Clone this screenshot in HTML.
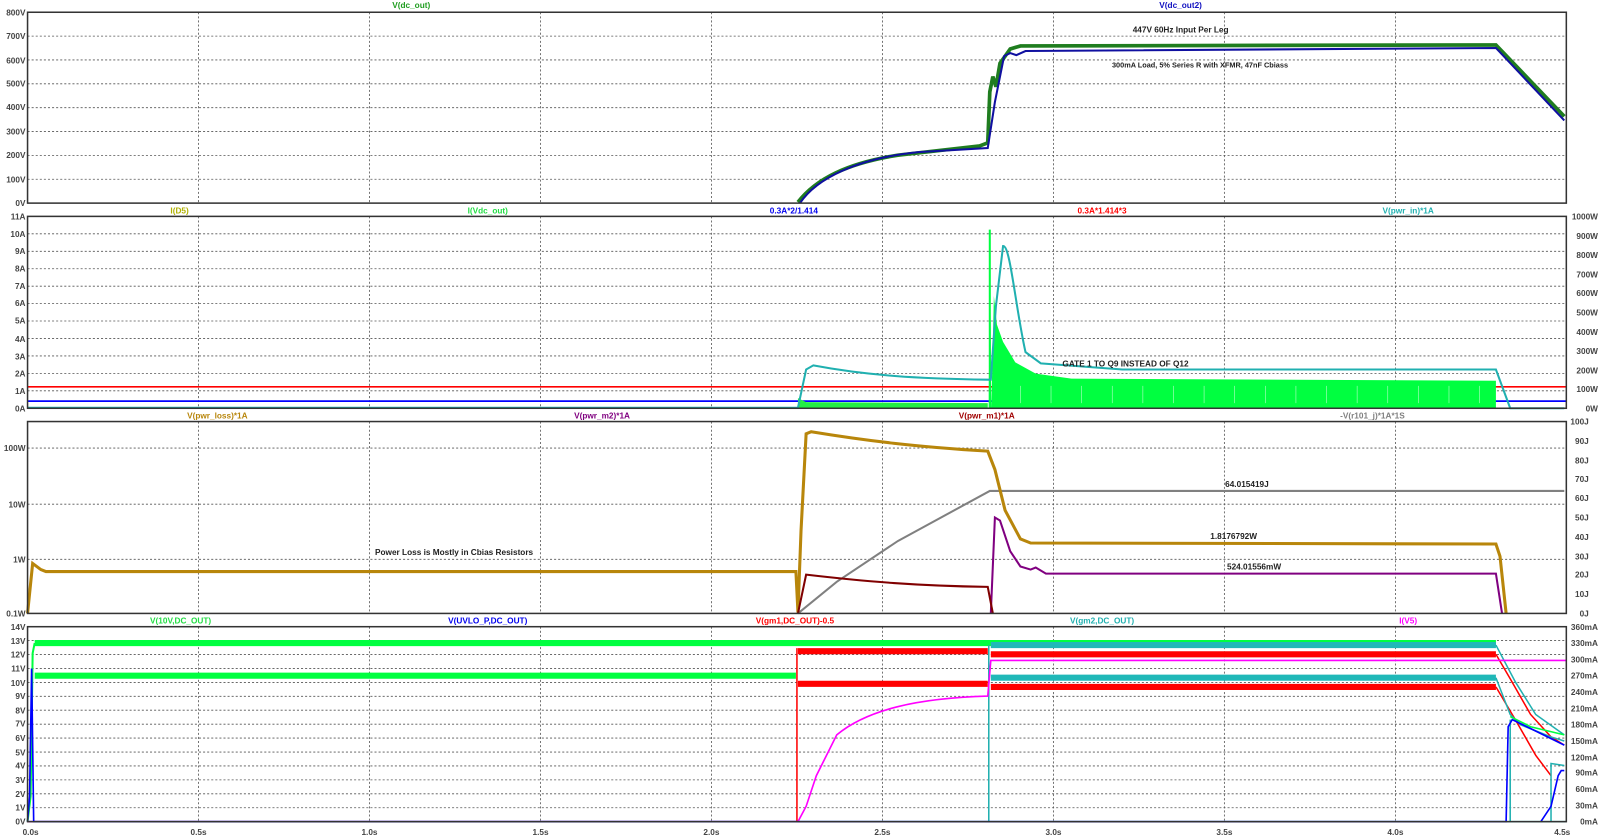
<!DOCTYPE html>
<html><head><meta charset="utf-8"><style>
html,body{margin:0;padding:0;background:#fff;}
svg{display:block}
text{font-family:"Liberation Sans",Arial,sans-serif;font-size:8.1px;font-weight:bold;}
.ax{fill:#444;}
.g{stroke:#555;stroke-width:0.8;stroke-dasharray:2,2;fill:none}
.f{stroke:#333;stroke-width:1.5;fill:none}
</style></head><body>
<svg width="1600" height="839" viewBox="0 0 1568 822" preserveAspectRatio="none" xmlns="http://www.w3.org/2000/svg">
<rect width="1568" height="822" fill="#fff"/>
<g class="g">
<path d="M194.6,12V199M362.1,12V199M529.7,12V199M697.2,12V199M864.8,12V199M1032.4,12V199M1199.9,12V199M1367.5,12V199
M194.6,212V400M362.1,212V400M529.7,212V400M697.2,212V400M864.8,212V400M1032.4,212V400M1199.9,212V400M1367.5,212V400
M194.6,413V601M362.1,413V601M529.7,413V601M697.2,413V601M864.8,413V601M1032.4,413V601M1199.9,413V601M1367.5,413V601
M194.6,614V805M362.1,614V805M529.7,614V805M697.2,614V805M864.8,614V805M1032.4,614V805M1199.9,614V805M1367.5,614V805"/>
<path d="M27,35.4H1535M27,58.7H1535M27,82.1H1535M27,105.5H1535M27,128.9H1535M27,152.2H1535M27,175.6H1535
M27,229.1H1535M27,246.2H1535M27,263.3H1535M27,280.4H1535M27,297.5H1535M27,314.5H1535M27,331.6H1535M27,348.7H1535M27,365.8H1535M27,382.9H1535
M27,439H1535M27,494H1535M27,548H1535
M27,627.6H1535M27,641.3H1535M27,654.9H1535M27,668.6H1535M27,682.2H1535M27,695.8H1535M27,709.5H1535M27,723.1H1535M27,736.8H1535M27,750.4H1535M27,764.1H1535M27,777.7H1535M27,791.4H1535"/>
</g>
<path d="M782,198 C800,175 830,160 880,152 L960,143 L968,140 L970,90 L973,75 L976,85 L980,62 L985,55 L990,48 L1000,45 L1466,44 L1533,114" stroke="#1f7d1f" stroke-width="3.6" fill="none"/>
<path d="M784,199 C800,175 840,155 900,149 L968,145 L975,100 L984,55 L990,52 L996,54 L1005,50 L1466,47 L1533,118" stroke="#1010a0" stroke-width="2" fill="none"/>
<path d="M27,379H1535" stroke="#f00" stroke-width="1.6"/>
<path d="M27,393H1535" stroke="#00f" stroke-width="1.6"/>
<path d="M782,400 L782,390 L790,394 L968,395 L968,400Z" fill="#22ee44"/>
<path d="M969,400 L970,225 L971.5,400 L974,290 L977,318 L983,335 L995,355 L1015,366 L1050,371 L1466,373 L1466,400Z" fill="#00ff40"/>
<path d="M970,400V225" stroke="#00ff40" stroke-width="2"/>
<path d="M1000,395V378M1030,395V378M1060,395V378M1090,395V378M1120,395V378M1150,395V378M1180,395V378M1210,395V378M1240,395V378M1270,395V378M1300,395V378M1330,395V378M1360,395V378M1390,395V378M1420,395V378M1450,395V378" stroke="#fff" stroke-width="0.6" opacity="0.7"/>
<path d="M27,399.5 L782,399.5 L790,362 L797,358 C850,368 900,371 968,372 L971,372 L976,300 L983,241 C990,240 995,300 1005,345 L1020,356 L1100,362 L1466,362 L1480,400 L1533,400" stroke="#20b0b0" stroke-width="2" fill="none"/>
<path d="M782,601 L820,570 L880,530 L970,481 L1533,481" stroke="#808080" stroke-width="2" fill="none"/>
<path d="M27,601 L32,552 L40,558 L45,560 L780,560 L782,600 L785,520 L790,425 L795,423 C850,432 900,438 968,442 L975,460 L985,500 L1000,528 L1010,532 L1466,533 L1470,545 L1476,601" stroke="#b8860b" stroke-width="3" fill="none"/>
<path d="M971,601 L975,507 L980,510 L990,540 L1000,555 L1010,558 L1015,556 L1025,562 L1466,562 L1472,601" stroke="#800080" stroke-width="2" fill="none"/>
<path d="M782,601 L790,563 C850,570 900,574 968,575 L973,601" stroke="#800000" stroke-width="2" fill="none"/>
<path d="M27,805H1535" stroke="#20b0b0" stroke-width="1.5"/>
<path d="M27,805 L30,780 L32,640 L34,630" stroke="#00ff40" stroke-width="2" fill="none"/>
<path d="M34,630H1466M34,662H780" stroke="#00ff40" stroke-width="6" fill="none"/>
<path d="M971,632H1466M971,664H1466" stroke="#20b8b8" stroke-width="6" fill="none"/>
<path d="M782,638H968M782,670H968M971,641H1466M971,673H1466" stroke="#f00" stroke-width="6" fill="none"/>
<path d="M781,805V635" stroke="#f00" stroke-width="1.5"/>
<path d="M1466,641 L1480,665 L1500,700 L1520,722 L1533,730 M1466,673 L1485,705 L1505,740 L1520,760" stroke="#f00" stroke-width="1.5" fill="none"/>
<path d="M969,805V632 M1466,632 L1485,668 L1505,700 L1533,720 M1466,664 L1480,700 L1490,710 L1520,722 L1533,726 M1480,805V705 M1520,805V748 L1533,750" stroke="#20b0b0" stroke-width="1.5" fill="none"/>
<path d="M1480,702 L1500,712 L1533,720" stroke="#00ff40" stroke-width="1.5" fill="none"/>
<path d="M27,805 L782,805 L790,790 L800,760 L820,720 C850,695 900,684 968,682 L971,647 L1535,647" stroke="#ff00ff" stroke-width="1.6" fill="none"/>
<path d="M27,805 L29,780 L31,655 L33,805 L1476,805 L1478,712 L1482,705 L1533,730 M1510,805 L1520,790 L1527,760 L1530,755 L1533,755" stroke="#0000ff" stroke-width="1.6" fill="none"/>
<rect class="f" x="27" y="12" width="1508" height="187"/>
<rect class="f" x="27" y="212" width="1508" height="188"/>
<rect class="f" x="27" y="413" width="1508" height="188"/>
<rect class="f" x="27" y="614" width="1508" height="191"/>
<g class="ax" text-anchor="end">
<text x="25" y="15">800V</text><text x="25" y="38">700V</text><text x="25" y="62">600V</text><text x="25" y="85">500V</text><text x="25" y="108">400V</text><text x="25" y="132">300V</text><text x="25" y="155">200V</text><text x="25" y="179">100V</text><text x="25" y="202">0V</text>
<text x="25" y="215">11A</text><text x="25" y="232">10A</text><text x="25" y="249">9A</text><text x="25" y="266">8A</text><text x="25" y="283">7A</text><text x="25" y="300">6A</text><text x="25" y="317">5A</text><text x="25" y="335">4A</text><text x="25" y="352">3A</text><text x="25" y="369">2A</text><text x="25" y="386">1A</text><text x="25" y="403">0A</text>
<text x="25" y="442">100W</text><text x="25" y="497">10W</text><text x="25" y="551">1W</text><text x="25" y="604">0.1W</text>
<text x="25" y="617">14V</text><text x="25" y="631">13V</text><text x="25" y="644">12V</text><text x="25" y="658">11V</text><text x="25" y="672">10V</text><text x="25" y="685">9V</text><text x="25" y="699">8V</text><text x="25" y="712">7V</text><text x="25" y="726">6V</text><text x="25" y="740">5V</text><text x="25" y="753">4V</text><text x="25" y="767">3V</text><text x="25" y="781">2V</text><text x="25" y="794">1V</text><text x="25" y="808">0V</text>
</g>
<g class="ax" text-anchor="end">
<text x="1566" y="215">1000W</text><text x="1566" y="234">900W</text><text x="1566" y="253">800W</text><text x="1566" y="272">700W</text><text x="1566" y="290">600W</text><text x="1566" y="309">500W</text><text x="1566" y="328">400W</text><text x="1566" y="347">300W</text><text x="1566" y="366">200W</text><text x="1566" y="384">100W</text><text x="1566" y="403">0W</text>
<text x="1557" y="416">100J</text><text x="1557" y="435">90J</text><text x="1557" y="454">80J</text><text x="1557" y="472">70J</text><text x="1557" y="491">60J</text><text x="1557" y="510">50J</text><text x="1557" y="529">40J</text><text x="1557" y="548">30J</text><text x="1557" y="566">20J</text><text x="1557" y="585">10J</text><text x="1557" y="604">0J</text>
<text x="1566" y="617">360mA</text><text x="1566" y="633">330mA</text><text x="1566" y="649">300mA</text><text x="1566" y="665">270mA</text><text x="1566" y="681">240mA</text><text x="1566" y="697">210mA</text><text x="1566" y="713">180mA</text><text x="1566" y="729">150mA</text><text x="1566" y="745">120mA</text><text x="1566" y="760">90mA</text><text x="1566" y="776">60mA</text><text x="1566" y="792">30mA</text><text x="1566" y="808">0mA</text>
</g>
<g class="ax" text-anchor="middle">
<text x="30" y="818">0.0s</text><text x="194.6" y="818">0.5s</text><text x="362.1" y="818">1.0s</text><text x="529.7" y="818">1.5s</text><text x="697.2" y="818">2.0s</text><text x="864.8" y="818">2.5s</text><text x="1032.4" y="818">3.0s</text><text x="1199.9" y="818">3.5s</text><text x="1367.5" y="818">4.0s</text><text x="1531" y="818">4.5s</text>
</g>
<g text-anchor="middle">
<text x="403" y="8" fill="#1f9d1f">V(dc_out)</text><text x="1157" y="8" fill="#1010c0">V(dc_out2)</text>
<text x="176" y="209" fill="#b0b000">I(D5)</text><text x="478" y="209" fill="#22dd44">I(Vdc_out)</text><text x="778" y="209" fill="#0000ee">0.3A*2/1.414</text><text x="1080" y="209" fill="#f00">0.3A*1.414*3</text><text x="1380" y="209" fill="#20b0b0">V(pwr_in)*1A</text>
<text x="213" y="410" fill="#b8860b">V(pwr_loss)*1A</text><text x="590" y="410" fill="#800080">V(pwr_m2)*1A</text><text x="967" y="410" fill="#a00000">V(pwr_m1)*1A</text><text x="1345" y="410" fill="#808080">-V(r101_j)*1A*1S</text>
<text x="177" y="611" fill="#22dd44">V(10V,DC_OUT)</text><text x="478" y="611" fill="#0000ee">V(UVLO_P,DC_OUT)</text><text x="779" y="611" fill="#f00">V(gm1,DC_OUT)-0.5</text><text x="1080" y="611" fill="#20b0b0">V(gm2,DC_OUT)</text><text x="1380" y="611" fill="#ff00ff">I(V5)</text>
</g>
<g fill="#222" text-anchor="middle">
<text x="1157" y="32">447V 60Hz Input Per Leg</text>
<text x="1176" y="66" style="font-size:7.2px">300mA Load, 5% Series R with XFMR, 47nF Cbiass</text>
<text x="1103" y="359">GATE 1 TO Q9 INSTEAD OF Q12</text>
<text x="445" y="544">Power Loss is Mostly in Cbias Resistors</text>
<text x="1222" y="477">64.015419J</text>
<text x="1209" y="528">1.8176792W</text>
<text x="1229" y="558">524.01556mW</text>
</g>
</svg>
</body></html>
